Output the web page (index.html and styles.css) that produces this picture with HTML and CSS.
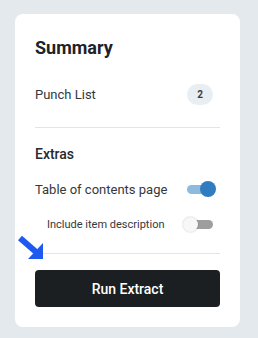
FILE: index.html
```html
<!DOCTYPE html>
<html lang="en">
<head>
    <meta charset="UTF-8">
    <meta name="viewport" content="width=device-width, initial-scale=1.0">
    <title>Summary</title>
    <link rel="stylesheet" href="styles.css">
</head>
<body>
    <div class="card">
        <h2 class="title">Summary</h2>
        <div class="row summary-row">
            <span>Punch List</span>
            <span class="badge">2</span>
        </div>
        <div class="divider"></div>

        <h3 class="subtitle">Extras</h3>
        <div class="row toc-row">
            <span>Table of contents page</span>
            <div class="toggle on"><div class="track"></div><div class="thumb"></div></div>
        </div>
        <div class="row sub-row">
            <span>Include item description</span>
            <div class="toggle off"><div class="track"></div><div class="thumb"></div></div>
        </div>
        <div class="divider divider-bottom"></div>

        <button class="run-btn">Run Extract</button>

        <!-- pointer arrow -->
        <svg class="pointer" width="26" height="25" viewBox="0 0 26 25">
            <path d="M2 3 L18 17" stroke="#1f5af0" stroke-width="6" fill="none"/>
            <path d="M25 8 L25 24 L10 24 Z" fill="#1f5af0"/>
        </svg>
    </div>
</body>
</html>
```

FILE: styles.css
```css
body {
    margin: 0;
    background: #e4e9ee;
    font-family: Roboto, 'Liberation Sans', sans-serif;
    color: #2b2f33;
}

.card {
    position: relative;
    margin: 14px 0 0 15px;
    width: 225px;
    box-sizing: border-box;
    padding: 22px 20px 20px 20px;
    background: #fff;
    border-radius: 8px;
    display: flex;
    flex-direction: column;
}

.title {
    margin: 0;
    font-size: 18px;
    line-height: 24px;
    font-weight: 700;
    color: #1e2226;
}

.row {
    display: flex;
    justify-content: space-between;
    align-items: center;
}

.summary-row {
    margin-top: 23px;
    height: 22px;
    font-size: 13px;
    color: #34383c;
}

.badge {
    width: 26px;
    height: 21px;
    border-radius: 11px;
    background: #e9eef2;
    font-size: 10px;
    font-weight: 700;
    color: #3a3e42;
    display: flex;
    align-items: center;
    justify-content: center;
    margin-right: 7px;
}

.divider {
    margin-top: 22px;
    height: 1px;
    background: #e2e5e8;
}

.subtitle {
    margin: 16px 0 0 0;
    font-size: 14px;
    line-height: 20px;
    font-weight: 500;
    color: #25292d;
}

.toc-row {
    margin-top: 15px;
    height: 20px;
    font-size: 13px;
    color: #34383c;
}

.sub-row {
    margin-top: 16px;
    height: 18px;
    padding-left: 12px;
    font-size: 11px;
    color: #34383c;
}

.toggle {
    position: relative;
    width: 30px;
    height: 16px;
}

.toggle .track {
    position: absolute;
    top: 4px;
    height: 9px;
    border-radius: 5px;
}

.toggle .thumb {
    position: absolute;
    border-radius: 50%;
}

.toggle.on {
    margin-right: 4px;
}

.toggle.on .track {
    left: 1px;
    width: 25px;
    background: #8dbbe0;
}

.toggle.on .thumb {
    right: 0;
    top: 0;
    width: 16px;
    height: 16px;
    background: #2f7dc0;
}

.toggle.off {
    margin-right: 6px;
    width: 31px;
}

.toggle.off .track {
    left: 6px;
    width: 24px;
    background: #9e9e9e;
}

.toggle.off .thumb {
    left: 0;
    top: 1px;
    width: 15px;
    height: 15px;
    background: #f7f7f7;
    box-shadow: 0 0 2px rgba(0, 0, 0, 0.25);
}

.divider-bottom {
    margin-top: 20px;
}

.run-btn {
    margin-top: 16px;
    height: 37px;
    border: none;
    border-radius: 4px;
    background: #1c1f22;
    color: #fff;
    font-family: Roboto, 'Liberation Sans', sans-serif;
    font-size: 14px;
    font-weight: 500;
}

.pointer {
    position: absolute;
    left: 3px;
    top: 221px;
}
```
